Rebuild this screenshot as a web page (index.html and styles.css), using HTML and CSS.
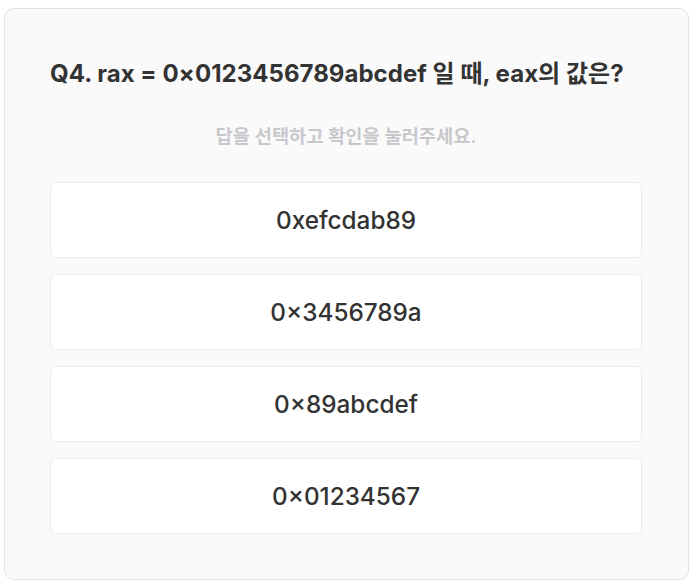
FILE: index.html
```html
<!DOCTYPE html>
<html lang="ko">
<head>
<meta charset="utf-8">
<link rel="stylesheet" href="styles.css">
</head>
<body>
<div class="card">
  <h2 class="question">Q4. rax = 0×0123456789abcdef 일 때, eax의 값은?</h2>
  <p class="hint">답을 선택하고 확인을 눌러주세요.</p>
  <div class="options">
    <button class="option">0xefcdab89</button>
    <button class="option">0×3456789a</button>
    <button class="option">0×89abcdef</button>
    <button class="option">0×01234567</button>
  </div>
</div>
</body>
</html>
```

FILE: styles.css
```css
* { box-sizing: border-box; }
html, body { margin: 0; padding: 0; background: #fff; }
body {
  padding: 8px 1px 0 4px;
  font-family: Inter, "Noto Sans CJK KR", sans-serif;
  color: #333;
}
.card {
  height: 572px;
  background: #fafafa;
  border: 1px solid #e4e4e4;
  border-radius: 10px;
  padding: 50px 46px 0 45px;
}
.question {
  margin: 0;
  font-size: 24px;
  font-weight: 700;
  line-height: 30px;
  letter-spacing: 0.04px;
  color: #333;
}
.hint {
  margin: 36px 0 0;
  text-align: center;
  font-size: 18.7px;
  font-weight: 600;
  color: #c8c8cc;
  line-height: 24px;
}
.options {
  margin-top: 33px;
  display: flex;
  flex-direction: column;
  gap: 16px;
}
.option {
  height: 76px;
  background: #fff;
  border: 1px solid #ebebeb;
  border-radius: 6px;
  font-family: Inter, "Noto Sans CJK KR", sans-serif;
  font-size: 24.3px;
  font-weight: 500;
  color: #333;
  padding: 0;
}
```
